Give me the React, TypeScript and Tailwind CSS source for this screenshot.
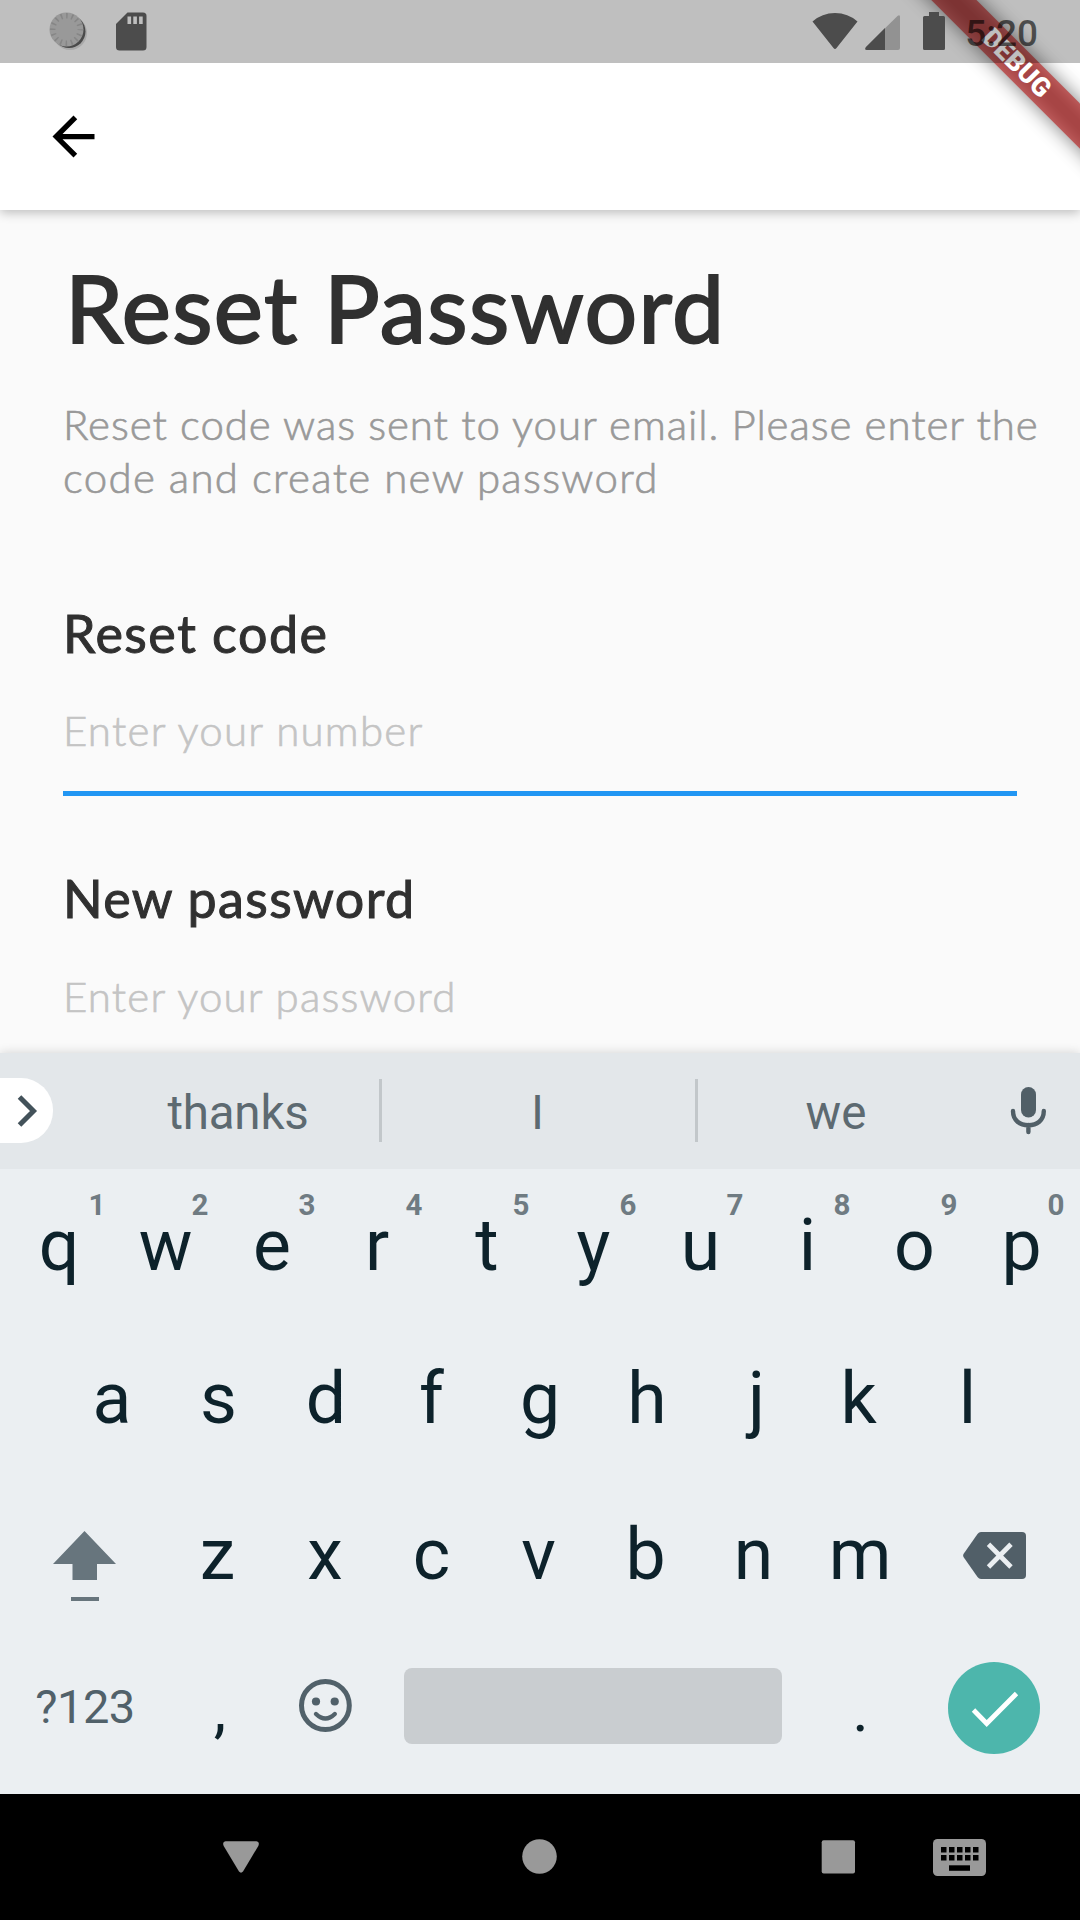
import React from "react";

const body = "font-['Lato','Liberation_Sans',sans-serif]";
const keyFont = "font-['Roboto','Liberation_Sans',sans-serif]";

const topRow = [
  ["q", "1"], ["w", "2"], ["e", "3"], ["r", "4"], ["t", "5"],
  ["y", "6"], ["u", "7"], ["i", "8"], ["o", "9"], ["p", "0"],
];

const optical: Record<string, string> = {
  q: "pl-[1px]", r: "pr-[5px]", e: "pr-[1px]", f: "pr-[3px]", j: "pl-[5px]", k: "pr-[5px]",
  l: "pr-[1px]", n: "pl-[2px]", m: "pl-[1px]", x: "pl-[1px]", s: "pr-[1px]", t: "pl-[1px]",
};

function StatusBar() {
  return (
    <header className="absolute top-0 left-0 z-20 flex h-[63px] w-full items-center bg-black/25">
      <svg className="ml-[48px] shrink-0" width="40" height="63" viewBox="48 0 40 63">
        <circle cx="70" cy="33" r="17" fill="#a9a9a9" />
        <circle cx="69" cy="31.500" r="16.500" fill="#4a4a4a" />
        <circle cx="66.500" cy="29.500" r="17" fill="#999" />
        <circle cx="66.500" cy="29.500" r="13.700" fill="none" stroke="#868686" strokeWidth="5.400" strokeDasharray="1.600 3.780" strokeDashoffset="0.800" />
      </svg>
      <svg className="ml-[26px] shrink-0" width="36" height="63" viewBox="114 0 36 63">
        <path d="M127.500 12.500H143a3.500 3.500 0 0 1 3.500 3.500V47a3.500 3.500 0 0 1-3.500 3.500H119.500a3.500 3.500 0 0 1-3.500-3.500V24Z" fill="#4c4c4c" />
        <path d="M127.500 16.500h3.600v7.500h-3.600zM133.300 16.500h3.600v7.500h-3.600zM139.100 16.500h3.600v7.500h-3.600z" fill="#bfbfbf" />
      </svg>
      <svg className="ml-auto shrink-0" width="140" height="63" viewBox="810 0 140 63">
        <path d="M812.500 21.500Q822 13 835 13T857.500 21.500L836.500 48Q835 50 833.500 48Z" fill="#4c4c4c" />
        <path d="M900 17Q900 14 897.500 16L866 47Q864 50 867 50H898Q900 50 900 48Z" fill="#929292" />
        <path d="M885 28L866 47Q864 50 867 50H885Z" fill="#4c4c4c" />
        <path d="M929 12h10v4h4.500q1.500 0 1.500 1.500v31q0 1.500-1.500 1.500h-19q-1.500 0-1.500-1.500v-31q0-1.500 1.500-1.500H929Z" fill="#4c4c4c" />
      </svg>
      <span className={`${keyFont} mr-[42px] ml-[15px] w-[73px] pt-[4px] text-right text-[37px] leading-[63px] font-medium whitespace-nowrap text-black/60`}>5:20</span>
    </header>
  );
}

function DebugRibbon() {
  return (
    <div className="absolute top-0 right-0 z-10 size-[220px] overflow-hidden">
      <div className="absolute top-[47px] left-[7px] h-[31.5px] w-[300px] rotate-45 bg-black/50 blur-[9.6px]" />
      <div className={`${keyFont} absolute top-[47px] left-[7px] flex h-[31.5px] w-[300px] rotate-45 items-center justify-center bg-[#b71c1c]/63 text-[26.5px] leading-none font-black text-white`}>
        DEBUG
      </div>
    </div>
  );
}

function Letter({ char, hint }: { char: string; hint?: string }) {
  return (
    <button className={`relative h-[154px] w-[107px] shrink-0 text-center text-[71.5px] leading-[150px] text-[#0d222b] ${optical[char] ?? ""}`}>
      {char}
      {hint && (
        <span className={`absolute top-[18px] w-[20px] text-center text-[29.5px] leading-[36px] font-bold text-[#6f7b82] ${hint === "1" ? "left-[82px]" : "left-[78px]"}`}>
          {hint}
        </span>
      )}
    </button>
  );
}

function Keyboard() {
  return (
    <section className={`${keyFont} relative flex h-[741px] shrink-0 flex-col bg-[#ebeff2] shadow-[0_0_10px_rgba(0,0,0,0.16)]`}>
      <div className="flex h-[116px] shrink-0 items-center bg-[#e3e7ea] text-[47.5px] text-[#5d6a71]">
        <div className="mb-px flex h-[65px] w-[53px] items-center rounded-r-[32px] bg-white">
          <svg className="ml-[15px]" width="26" height="36" viewBox="0 0 26 36">
            <path d="M4.500 4L18.500 18L4.500 32" fill="none" stroke="#43525a" strokeWidth="5" />
          </svg>
        </div>
        <div className="ml-[44px] w-[282px] pt-[6px] text-center tracking-[-0.2px]">thanks</div>
        <div className="mb-[2px] h-[63px] w-[3px] bg-[#c2c7ca]" />
        <div className="w-[313px] pt-[6px] pr-[2px] text-center">I</div>
        <div className="mb-[2px] h-[63px] w-[3px] bg-[#c2c7ca]" />
        <div className="w-[276px] pt-[6px] text-center">we</div>
        <svg className="ml-[30px]" width="48" height="56" viewBox="1004 1082 48 56">
          <rect x="1021" y="1086" width="15" height="30.500" rx="7.500" fill="#515f67" />
          <path d="M1013 1110c0 9.500 7 14.300 15.400 14.300s15.400-4.800 15.400-14.300M1028.400 1124v7" fill="none" stroke="#515f67" strokeWidth="4.400" strokeLinecap="round" />
        </svg>
      </div>
      <div className="flex h-[153px] justify-center">
        {topRow.map(([char, hint]) => <Letter key={char} char={char} hint={hint} />)}
      </div>
      <div className="flex h-[156px] justify-center">
        {"asdfghjkl".split("").map((char) => <Letter key={char} char={char} />)}
      </div>
      <div className="flex h-[154px]">
        <svg className="w-[164px] shrink-0" height="154" viewBox="0 1478 164 154" fill="#67757d">
          <path d="M84.500 1531L116 1564H97V1580H72.500V1564H53Z" />
          <rect x="71" y="1597" width="28" height="4" />
        </svg>
        {"zxcvbnm".split("").map((char) => <Letter key={char} char={char} />)}
        <svg className="w-[167px] shrink-0" height="154" viewBox="913 1478 167 154">
          <path d="M981 1532H1022Q1026 1532 1026 1536V1575Q1026 1579 1022 1579H981Q979 1579 977.500 1577L963.500 1557Q962.800 1555.500 963.500 1554L977.500 1534Q979 1532 981 1532Z" fill="#515f68" />
          <path d="M988.500 1544.300L1011 1567M1011 1544.300L988.500 1567" stroke="#ebeff2" strokeWidth="4.800" />
        </svg>
      </div>
      <div className="flex h-[162px] items-start">
        <button className="w-[164px] pl-[6px] text-center text-[47px] leading-[150px] tracking-[-0.5px] text-[#51616a]">?123</button>
        <button className="w-[107px] pl-[5px] text-center text-[63px] leading-[155px] text-[#0d222b]">,</button>
        <svg className="shrink-0" width="107" height="150" viewBox="271 1632 107 150">
          <circle cx="325.400" cy="1705.500" r="23.900" fill="none" stroke="#51616a" strokeWidth="5" />
          <circle cx="316" cy="1701.500" r="4.100" fill="#51616a" />
          <circle cx="334.700" cy="1701.500" r="4.100" fill="#51616a" />
          <path d="M316 1714q9.400 9 18.800 0" fill="none" stroke="#51616a" strokeWidth="4.400" strokeLinecap="round" />
        </svg>
        <div className="mt-[36px] ml-[26px] h-[76px] w-[378px] rounded-[8px] bg-[#c9cdd0]" />
        <button className="ml-[25px] w-[107px] text-center text-[63px] leading-[155px] text-[#0d222b]">.</button>
        <div className="mt-[30px] ml-[34px] size-[92px] rounded-full bg-[#4db6ac]">
          <svg width="92" height="92" viewBox="948 1662 92 92">
            <path d="M973.500 1710L986.700 1723.500L1016.500 1693.500" fill="none" stroke="#fff" strokeWidth="4.800" />
          </svg>
        </div>
      </div>
    </section>
  );
}

function NavigationBar() {
  return (
    <footer className="h-[126px] shrink-0 bg-black">
      <svg width="1080" height="126" viewBox="0 1794 1080 126" fill="#999">
        <path d="M225.500 1841.300H256.500Q260 1842 258.300 1846L243 1871.500Q241 1873.800 239 1871.500L223.700 1846Q222 1842 225.500 1841.300Z" />
        <circle cx="539.500" cy="1856.500" r="17.300" />
        <rect x="821.700" y="1840.300" width="33.300" height="33.300" rx="2" />
        <rect x="933" y="1839" width="53" height="37" rx="4.500" />
        {[0, 1, 2, 3, 4].map((i) => (
          <g key={i} fill="#000">
            <rect x={941 + i * 8} y="1847" width="5.500" height="5.500" />
            <rect x={941 + i * 8} y="1855" width="5.500" height="5.500" />
          </g>
        ))}
        <rect x="949" y="1865.300" width="21" height="5.500" fill="#000" />
      </svg>
    </footer>
  );
}

export default function App() {
  return (
    <div className="relative flex h-[1920px] w-[1080px] flex-col overflow-hidden bg-[#fafafa]">
      <StatusBar />
      <nav className="flex h-[210px] shrink-0 items-center bg-white pt-[63px] pl-[42px] shadow-[0_3px_10px_rgba(0,0,0,0.24)]">
        <svg width="63" height="63" viewBox="0 0 24 24">
          <path d="M20 11H7.830l5.590-5.590L12 4l-8 8 8 8 1.410-1.410L7.830 13H20v-2z" />
        </svg>
      </nav>
      <main className={`${body} flex h-[843px] shrink-0 flex-col pl-[63px]`}>
        <h1 className="mt-[39px] h-[120px] pl-[2px] text-[93px] leading-[116px] tracking-[1.4px] whitespace-nowrap text-[#303030] [-webkit-text-stroke:2px_#303030] [stroke-linejoin:round]">Reset Password</h1>
        <p className="mt-[29px] text-[42px] leading-[53px] font-light whitespace-nowrap text-[#999] [-webkit-text-stroke:0.7px_#999]">
          <span className="block tracking-[0.92px]">Reset code was sent to your email. Please enter the</span>
          <span className="block tracking-[1.3px]">code and create new password</span>
        </p>
        <label className="mt-[96px] h-[66px] text-[52px] leading-[66px] tracking-[1.5px] whitespace-nowrap text-[#303030] [-webkit-text-stroke:1px_#303030]">Reset code</label>
        <div className="mt-[38px] h-[87px] w-[954px] text-[42px] leading-[53px] font-light tracking-[1.25px] whitespace-nowrap text-[#c4c4c4] [-webkit-text-stroke:0.7px_#c4c4c4]">Enter your number</div>
        <div className="h-[5px] w-[954px] shrink-0 bg-[#2196f3]" />
        <label className="mt-[69px] h-[66px] text-[52px] leading-[66px] tracking-[1.35px] whitespace-nowrap text-[#303030] [-webkit-text-stroke:1px_#303030]">New password</label>
        <div className="mt-[39px] h-[53px] text-[42px] leading-[53px] font-light tracking-[1.2px] whitespace-nowrap text-[#c4c4c4] [-webkit-text-stroke:0.7px_#c4c4c4]">Enter your password</div>
      </main>
      <Keyboard />
      <NavigationBar />
      <DebugRibbon />
    </div>
  );
}
